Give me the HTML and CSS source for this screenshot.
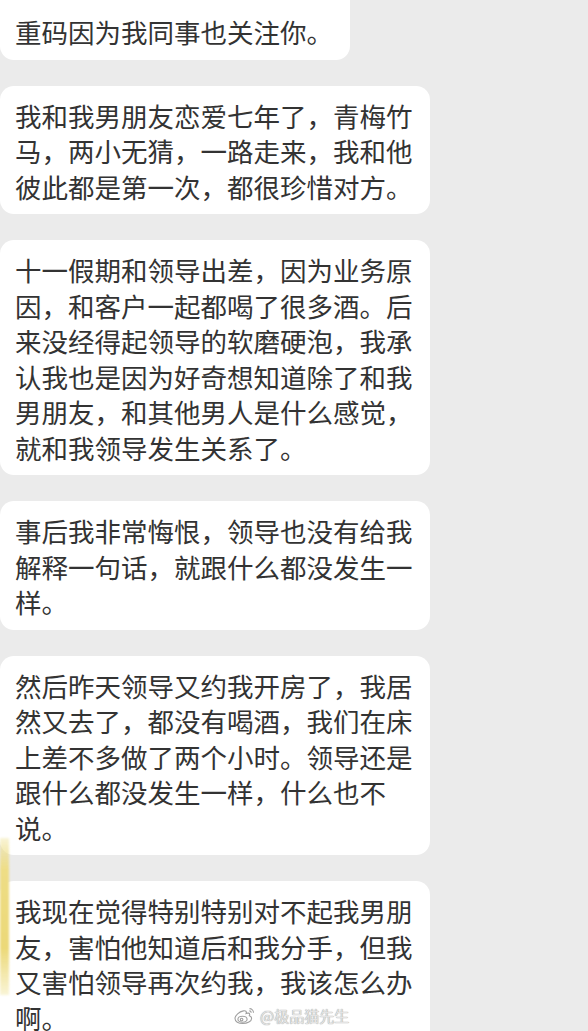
FILE: index.html
```html
<!DOCTYPE html>
<html lang="zh-CN">

<head>
  <meta charset="UTF-8" />
  <meta name="viewport" content="width=device-width, initial-scale=1.0" />
  <title>聊天记录</title>
  <link rel="stylesheet" href="styles.css">
</head>

<body>
  <div class="chat">
    <div class="bubble bubble-cut">重码因为我同事也关注你。</div>

    <div class="bubble">我和我男朋友恋爱七年了，青梅竹<br>马，两小无猜，一路走来，我和他<br>彼此都是第一次，都很珍惜对方。</div>

    <div class="bubble">十一假期和领导出差，因为业务原<br>因，和客户一起都喝了很多酒。后<br>来没经得起领导的软磨硬泡，我承<br>认我也是因为好奇想知道除了和我<br>男朋友，和其他男人是什么感觉，<br>就和我领导发生关系了。</div>

    <div class="bubble">事后我非常悔恨，领导也没有给我<br>解释一句话，就跟什么都没发生一<br>样。</div>

    <div class="bubble">然后昨天领导又约我开房了，我居<br>然又去了，都没有喝酒，我们在床<br>上差不多做了两个小时。领导还是<br>跟什么都没发生一样，什么也不<br>说。</div>

    <div class="bubble bubble-last">我现在觉得特别特别对不起我男朋<br>友，害怕他知道后和我分手，但我<br>又害怕领导再次约我，我该怎么办<br>啊。</div>
  </div>

  <!-- cut-off avatar at the left edge -->
  <div class="avatar-edge"></div>

  <div class="watermark">
    <svg class="weibo" width="24" height="18" viewBox="0 0 24 18" fill="none" stroke="#a0a0a0" stroke-width="1.1">
      <path d="M3 11.5c0-3.2 4.2-6.8 8.4-7.6 2.4-.5 3.4.6 2.7 2.6 1.6-.7 3.6-.6 3.6.9 0 .5-.1 1-.4 1.4 1.5.5 2.3 1.4 2.3 2.6 0 2.8-4.2 5.1-8.8 5.1C6.4 16.5 3 14.6 3 11.5z" />
      <ellipse cx="10.5" cy="12.2" rx="4.6" ry="3" />
      <circle cx="9.6" cy="12.6" r="1.3" />
      <path d="M17.5 1.6c2.2 0 4 1.8 4 4.1" />
      <path d="M17.3 3.9c1 0 1.9.8 1.9 1.9" />
    </svg>
    <span>@极品猫先生</span>
  </div>
</body>

</html>
```

FILE: styles.css
```css
body {
  margin: 0;
  background: #ebebeb;
  font-family: "Noto Sans CJK SC", "Noto Sans", sans-serif;
  color: #333;
  min-height: 1031px;
  position: relative;
  overflow: hidden;
}

.chat {
  display: flex;
  flex-direction: column;
  align-items: flex-start;
  gap: 26px;
}

.bubble {
  background: #fff;
  border-radius: 14px;
  padding: 12px 17px 10px 15px;
  font-size: 26.5px;
  line-height: 35.5px;
  white-space: nowrap;
}

/* first and last bubbles run past the screenshot edges */
.bubble-cut {
  border-top-left-radius: 0;
  border-top-right-radius: 0;
  padding-top: 14px;
}

.bubble-last {
  border-bottom-left-radius: 0;
  border-bottom-right-radius: 0;
}

.avatar-edge {
  position: absolute;
  left: 0;
  top: 838px;
  width: 9px;
  height: 157px;
  background: linear-gradient(180deg, rgba(236, 220, 120, 0.3), #eedd86 20%, #ecd978 70%, rgba(236, 220, 120, 0.3));
  filter: blur(1px);
}

.watermark {
  position: absolute;
  left: 232px;
  top: 1006px;
  display: flex;
  align-items: center;
  gap: 4px;
}

.watermark span {
  font-size: 15px;
  line-height: 20px;
  color: #e4e4e4;
  text-shadow: 0 0 1px #a8a8a8, 0 0 1px #a8a8a8;
}
```
